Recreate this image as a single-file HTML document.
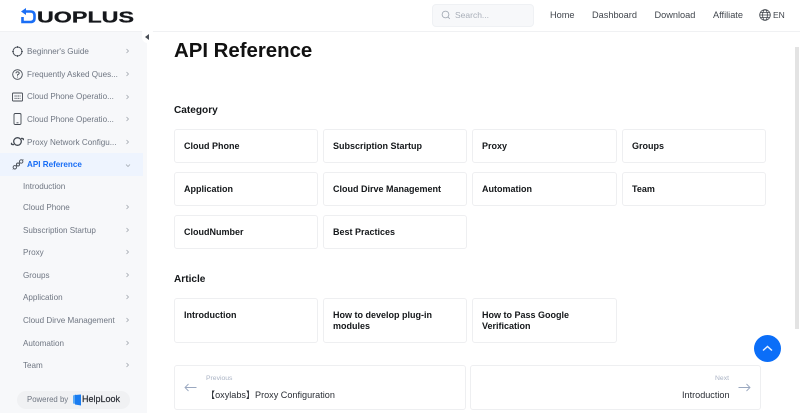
<!DOCTYPE html>
<html><head><meta charset="utf-8">
<style>
html,body{margin:0;padding:0;width:800px;height:419px;overflow:hidden;background:#fff;font-family:"Liberation Sans","Noto Sans CJK SC",sans-serif}
.a{position:absolute;white-space:nowrap}
#side{position:absolute;left:0;top:32px;width:147px;height:381px;background:#f7f8fa}
.s{position:absolute;font-size:8.1px;color:#6f7682;white-space:nowrap;line-height:12px}
.ch{position:absolute;left:125px;width:5px;height:8px}
.card{position:absolute;box-sizing:border-box;border:1px solid #eeeff1;border-radius:3px;background:#fff;font-size:9px;font-weight:700;color:#14171a;padding:0 9px;line-height:10.5px}
.nav{position:absolute;top:8px;font-size:9.2px;color:#41464d;line-height:14px}
h2{position:absolute;margin:0;font-size:10.1px;font-weight:700;color:#14171a;line-height:14px;left:174px}
svg{position:absolute;overflow:visible}
</style></head><body>
<div class="a" style="left:0;top:0;width:800px;height:32px;border-bottom:1px solid #f0f1f3;box-sizing:border-box"></div>

<svg style="left:20px;top:7px" width="116" height="18" viewBox="0 0 116 18">
<path d="M4.500 4.500H10.500Q14.500 4.500 14.500 8.500V11Q14.500 15 10.500 15H2.500V10" fill="none" stroke="#1a6ef5" stroke-width="2.600"/>
<path d="M1 4.500L6 1V8Z" fill="#1a6ef5"/>
<text x="17" y="15.500" font-family="Liberation Sans" font-weight="700" font-size="16" fill="#16181c" stroke="#16181c" stroke-width=".3" textLength="97" lengthAdjust="spacingAndGlyphs">UOPLUS</text>
</svg>

<div class="a" style="left:432px;top:4px;width:102px;height:23px;background:#f7f8fa;border:1px solid #eff1f4;border-radius:4px;box-sizing:border-box"></div>
<svg style="left:441px;top:10px" width="10" height="10" viewBox="0 0 10 10"><circle cx="4.500" cy="4.500" r="3.400" fill="none" stroke="#9aa2ad" stroke-width=".8"/><path d="M7 7L8.800 8.800" stroke="#9aa2ad" stroke-width=".8"/></svg>
<div class="a" style="left:455px;top:9px;font-size:8.5px;color:#a8aeb8;line-height:13px">Search...</div>
<div class="nav" style="left:550px">Home</div>
<div class="nav" style="left:592px">Dashboard</div>
<div class="nav" style="left:654.500px">Download</div>
<div class="nav" style="left:713px">Affiliate</div>
<svg style="left:759px;top:9px" width="12" height="12" viewBox="0 0 12 12" fill="none" stroke="#3c4148" stroke-width=".8"><circle cx="6" cy="6" r="5.300"/><ellipse cx="6" cy="6" rx="2.400" ry="5.300"/><path d="M.7 6H11.300M1.400 3.400H10.600M1.400 8.600H10.600"/></svg>
<div class="a" style="left:773px;top:9px;font-size:8.5px;color:#41464d;line-height:13px">EN</div>

<div id="side"></div>
<div class="a" style="left:0;top:153px;width:143px;height:23px;background:#eef4fe"></div>

<div class="a" style="left:142px;top:27px;width:11px;height:16px;background:#fff;border-radius:8px"></div>
<svg style="left:145px;top:34px" width="5" height="6" viewBox="0 0 5 6"><path d="M4 0V6L0 3Z" fill="#4a4f57"/></svg>

<svg style="left:12px;top:46px" width="11" height="11" viewBox="0 0 11 11" fill="none" stroke="#444a53" stroke-width="1"><circle cx="5.500" cy="5.500" r="4.500"/><path d="M5.500 0V2M5.500 9V11M0 5.500H2M9 5.500H11" stroke="#444a53" stroke-width=".8"/></svg>
<svg style="left:12px;top:69px" width="11" height="11" viewBox="0 0 11 11" fill="none" stroke="#444a53" stroke-width=".9"><circle cx="5.500" cy="5.500" r="4.800"/><path d="M3.900 4.300Q4 2.800 5.500 2.800Q7.200 2.800 7.200 4.200Q7.200 5 5.500 5.800V6.800M5.500 7.600V8.500"/></svg>
<svg style="left:12px;top:92px" width="11" height="10" viewBox="0 0 11 10" fill="none" stroke="#444a53" stroke-width=".9"><rect x=".5" y="1" width="10" height="8" rx=".8"/><path d="M2.500 4H8.500M2.500 6.300H8.500" stroke-dasharray="1.200 .6"/></svg>
<svg style="left:13px;top:113px" width="9" height="12" viewBox="0 0 9 12" fill="none" stroke="#444a53" stroke-width=".9"><rect x="1" y=".5" width="7" height="11" rx="1.200"/><path d="M3.500 9.800H5.500"/></svg>
<svg style="left:11px;top:136px" width="13" height="11" viewBox="0 0 13 11" fill="none" stroke="#444a53" stroke-width="1.300"><circle cx="6.500" cy="5.500" r="3.800"/><path d="M3 8.500Q-.5 9 .8 6.800M10 2.500Q13 2 12.200 4.200"/></svg>
<svg style="left:12px;top:159px" width="12" height="11" viewBox="0 0 12 11" fill="none" stroke="#444a53" stroke-width=".9"><circle cx="2.800" cy="8.300" r="1.700"/><circle cx="6" cy="5.500" r="1.500"/><circle cx="9.200" cy="2.500" r="1.700"/><path d="M1 10.500L.8 10.800M4 7.200L4.700 6.500M7.200 4.300L7.900 3.700M10.800 1L11.300 .5"/></svg>

<div class="s" style="left:27px;top:46px">Beginner's Guide</div>
<div class="s" style="left:27px;top:69px">Frequently Asked Ques...</div>
<div class="s" style="left:27px;top:91px">Cloud Phone Operatio...</div>
<div class="s" style="left:27px;top:114px">Cloud Phone Operatio...</div>
<div class="s" style="left:27px;top:137px">Proxy Network Configu...</div>
<div class="s" style="left:27px;top:159px;color:#1a6ef5;font-weight:700">API Reference</div>
<div class="s" style="left:23px;top:181px">Introduction</div>
<div class="s" style="left:23px;top:202px">Cloud Phone</div>
<div class="s" style="left:23px;top:225px">Subscription Startup</div>
<div class="s" style="left:23px;top:247px">Proxy</div>
<div class="s" style="left:23px;top:270px">Groups</div>
<div class="s" style="left:23px;top:292px">Application</div>
<div class="s" style="left:23px;top:315px">Cloud Dirve Management</div>
<div class="s" style="left:23px;top:338px">Automation</div>
<div class="s" style="left:23px;top:360px">Team</div>

<svg class="ch" style="top:47px" viewBox="0 0 5 8"><path d="M1.500 2L3.500 4L1.500 6" fill="none" stroke="#9aa0a9" stroke-width=".7"/></svg>
<svg class="ch" style="top:70px" viewBox="0 0 5 8"><path d="M1.500 2L3.500 4L1.500 6" fill="none" stroke="#9aa0a9" stroke-width=".7"/></svg>
<svg class="ch" style="top:93px" viewBox="0 0 5 8"><path d="M1.500 2L3.500 4L1.500 6" fill="none" stroke="#9aa0a9" stroke-width=".7"/></svg>
<svg class="ch" style="top:115px" viewBox="0 0 5 8"><path d="M1.500 2L3.500 4L1.500 6" fill="none" stroke="#9aa0a9" stroke-width=".7"/></svg>
<svg class="ch" style="top:138px" viewBox="0 0 5 8"><path d="M1.500 2L3.500 4L1.500 6" fill="none" stroke="#9aa0a9" stroke-width=".7"/></svg>
<svg style="left:124px;top:163px" width="8" height="5" viewBox="0 0 8 5"><path d="M2 1.500L4 3.500L6 1.500" fill="none" stroke="#9aa0a9" stroke-width=".7"/></svg>
<svg class="ch" style="top:203px" viewBox="0 0 5 8"><path d="M1.500 2L3.500 4L1.500 6" fill="none" stroke="#9aa0a9" stroke-width=".7"/></svg>
<svg class="ch" style="top:226px" viewBox="0 0 5 8"><path d="M1.500 2L3.500 4L1.500 6" fill="none" stroke="#9aa0a9" stroke-width=".7"/></svg>
<svg class="ch" style="top:248px" viewBox="0 0 5 8"><path d="M1.500 2L3.500 4L1.500 6" fill="none" stroke="#9aa0a9" stroke-width=".7"/></svg>
<svg class="ch" style="top:271px" viewBox="0 0 5 8"><path d="M1.500 2L3.500 4L1.500 6" fill="none" stroke="#9aa0a9" stroke-width=".7"/></svg>
<svg class="ch" style="top:293px" viewBox="0 0 5 8"><path d="M1.500 2L3.500 4L1.500 6" fill="none" stroke="#9aa0a9" stroke-width=".7"/></svg>
<svg class="ch" style="top:316px" viewBox="0 0 5 8"><path d="M1.500 2L3.500 4L1.500 6" fill="none" stroke="#9aa0a9" stroke-width=".7"/></svg>
<svg class="ch" style="top:339px" viewBox="0 0 5 8"><path d="M1.500 2L3.500 4L1.500 6" fill="none" stroke="#9aa0a9" stroke-width=".7"/></svg>
<svg class="ch" style="top:361px" viewBox="0 0 5 8"><path d="M1.500 2L3.500 4L1.500 6" fill="none" stroke="#9aa0a9" stroke-width=".7"/></svg>

<div class="a" style="left:17px;top:391px;width:113px;height:18px;background:#f0f1f3;border-radius:9px"></div>
<div class="a" style="left:27px;top:394px;font-size:7.800px;color:#6f7682;line-height:12px">Powered by</div>
<svg style="left:73px;top:394px" width="8" height="12" viewBox="0 0 8 12"><path d="M0 1.500L3 .5V10L0 9.500Z" fill="#5aa9f5"/><path d="M2 1L8 .5V11.500L2 10.500Z" fill="#1a7cf0"/></svg>
<div class="a" style="left:82px;top:393px;font-size:9px;color:#2a2e35;line-height:13px;-webkit-text-stroke:.2px #2a2e35">HelpLook</div>

<div class="a" style="left:174px;top:38px;font-size:20.4px;font-weight:700;color:#111;line-height:26px">API Reference</div>
<h2 style="top:104px">Category</h2>
<h2 style="top:273px">Article</h2>

<div class="card" style="left:174px;top:129px;width:144px;height:34px;padding-top:11px">Cloud Phone</div>
<div class="card" style="left:323px;top:129px;width:144px;height:34px;padding-top:11px">Subscription Startup</div>
<div class="card" style="left:472px;top:129px;width:145px;height:34px;padding-top:11px">Proxy</div>
<div class="card" style="left:622px;top:129px;width:144px;height:34px;padding-top:11px">Groups</div>
<div class="card" style="left:174px;top:172px;width:144px;height:34px;padding-top:11px">Application</div>
<div class="card" style="left:323px;top:172px;width:144px;height:34px;padding-top:11px">Cloud Dirve Management</div>
<div class="card" style="left:472px;top:172px;width:145px;height:34px;padding-top:11px">Automation</div>
<div class="card" style="left:622px;top:172px;width:144px;height:34px;padding-top:11px">Team</div>
<div class="card" style="left:174px;top:215px;width:144px;height:34px;padding-top:11px">CloudNumber</div>
<div class="card" style="left:323px;top:215px;width:144px;height:34px;padding-top:11px">Best Practices</div>
<div class="card" style="left:174px;top:298px;width:144px;height:45px;padding-top:11px">Introduction</div>
<div class="card" style="left:323px;top:298px;width:144px;height:45px;padding-top:11px">How to develop plug-in<br>modules</div>
<div class="card" style="left:472px;top:298px;width:145px;height:45px;padding-top:11px">How to Pass Google<br>Verification</div>

<div class="card" style="left:174px;top:365px;width:292px;height:45px"></div>
<div class="card" style="left:470px;top:365px;width:291px;height:45px"></div>
<svg style="left:184px;top:383px" width="13" height="9" viewBox="0 0 13 9"><path d="M12.500 4.500H1M4.500 1L1 4.500L4.500 8" fill="none" stroke="#9aa8c0" stroke-width=".9"/></svg>
<svg style="left:738px;top:383px" width="13" height="9" viewBox="0 0 13 9"><path d="M.5 4.500H12M8.500 1L12 4.500L8.500 8" fill="none" stroke="#9aa8c0" stroke-width=".9"/></svg>
<div class="a" style="left:206px;top:374px;font-size:6.800px;color:#aab3c4;line-height:10px">Previous</div>
<div class="a" style="left:715px;top:374px;font-size:6.800px;color:#aab3c4;line-height:10px">Next</div>
<div class="a" style="left:206px;top:388px;font-size:9.1px;color:#2a2e35;line-height:14px">【oxylabs】Proxy Configuration</div>
<div class="a" style="left:682px;top:388px;font-size:9.1px;color:#2a2e35;line-height:14px">Introduction</div>

<div class="a" style="left:754px;top:335px;width:27px;height:27px;background:#0b6ef8;border-radius:50%"></div>
<svg style="left:762px;top:345px" width="11" height="7" viewBox="0 0 11 7"><path d="M1 5.500L5.500 1.500L10 5.500" fill="none" stroke="#e8f1ff" stroke-width="1.500"/></svg>

<div class="a" style="left:795px;top:47px;width:4px;height:282px;background:#e3e3e3"></div>
</body></html>
